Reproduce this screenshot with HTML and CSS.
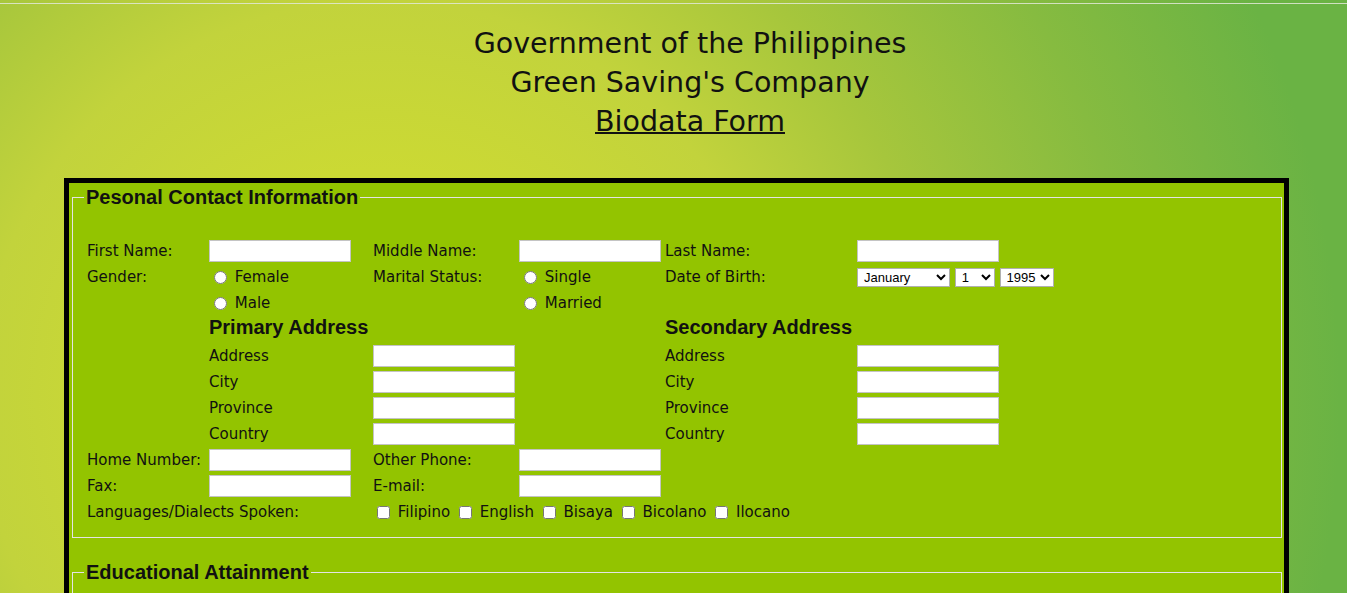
FILE: index.html
```html
<!DOCTYPE html>
<html lang="en">
<head>
    <meta charset="UTF-8">
    <meta name="viewport" content="width=device-width, initial-scale=1.0">
    <title>Biodata Form</title>
    <link rel="stylesheet" href="styles.css">
</head>
<body>
    <div class="topline"></div>

    <div class="header">
        Government of the Philippines<br>
        Green Saving's Company<br>
        <u>Biodata Form</u>
    </div>

    <form class="form-box">
        <fieldset>
            <legend>Pesonal Contact Information</legend>
            <table class="grid">
                <colgroup>
                    <col class="c1"><col class="c2"><col class="c3"><col class="c4"><col class="c5"><col>
                </colgroup>
                <tr>
                    <td>First Name:</td>
                    <td><input type="text" name="fname"></td>
                    <td>Middle Name:</td>
                    <td><input type="text" name="mname"></td>
                    <td>Last Name:</td>
                    <td><input type="text" name="lname"></td>
                </tr>
                <tr>
                    <td>Gender:</td>
                    <td><input type="radio" name="gender" value="f"> Female</td>
                    <td>Marital Status:</td>
                    <td><input type="radio" name="status" value="s"> Single</td>
                    <td>Date of Birth:</td>
                    <td class="dob">
                        <select class="month">
                            <option>January</option><option>February</option><option>March</option>
                            <option>April</option><option>May</option><option>June</option>
                            <option>July</option><option>August</option><option>September</option>
                            <option>October</option><option>November</option><option>December</option>
                        </select>
                        <select class="day">
                            <option>1</option><option>2</option><option>3</option><option>4</option>
                            <option>5</option><option>6</option><option>7</option><option>8</option>
                            <option>9</option><option>10</option><option>11</option><option>12</option>
                            <option>13</option><option>14</option><option>15</option><option>16</option>
                            <option>17</option><option>18</option><option>19</option><option>20</option>
                            <option>21</option><option>22</option><option>23</option><option>24</option>
                            <option>25</option><option>26</option><option>27</option><option>28</option>
                            <option>29</option><option>30</option><option>31</option>
                        </select>
                        <select class="year">
                            <option>1995</option><option>1996</option><option>1997</option>
                            <option>1998</option><option>1999</option><option>2000</option>
                        </select>
                    </td>
                </tr>
                <tr>
                    <td></td>
                    <td><input type="radio" name="gender" value="m"> Male</td>
                    <td></td>
                    <td><input type="radio" name="status" value="m"> Married</td>
                    <td></td>
                    <td></td>
                </tr>
                <tr class="head-row">
                    <td></td>
                    <td colspan="2" class="sub">Primary Address</td>
                    <td></td>
                    <td colspan="2" class="sub">Secondary Address</td>
                </tr>
                <tr>
                    <td></td>
                    <td>Address</td>
                    <td><input type="text" name="addr1"></td>
                    <td></td>
                    <td>Address</td>
                    <td><input type="text" name="addr2"></td>
                </tr>
                <tr>
                    <td></td>
                    <td>City</td>
                    <td><input type="text" name="city1"></td>
                    <td></td>
                    <td>City</td>
                    <td><input type="text" name="city2"></td>
                </tr>
                <tr>
                    <td></td>
                    <td>Province</td>
                    <td><input type="text" name="prov1"></td>
                    <td></td>
                    <td>Province</td>
                    <td><input type="text" name="prov2"></td>
                </tr>
                <tr>
                    <td></td>
                    <td>Country</td>
                    <td><input type="text" name="country1"></td>
                    <td></td>
                    <td>Country</td>
                    <td><input type="text" name="country2"></td>
                </tr>
                <tr>
                    <td>Home Number:</td>
                    <td><input type="text" name="home"></td>
                    <td>Other Phone:</td>
                    <td><input type="text" name="other"></td>
                    <td></td>
                    <td></td>
                </tr>
                <tr>
                    <td>Fax:</td>
                    <td><input type="text" name="fax"></td>
                    <td>E-mail:</td>
                    <td><input type="text" name="email"></td>
                    <td></td>
                    <td></td>
                </tr>
                <tr>
                    <td colspan="2">Languages/Dialects Spoken:</td>
                    <td colspan="4"><input type="checkbox"> Filipino <input type="checkbox"> English <input type="checkbox"> Bisaya <input type="checkbox"> Bicolano <input type="checkbox"> Ilocano</td>
                </tr>
            </table>
        </fieldset>

        <fieldset class="edu">
            <legend>Educational Attainment</legend>
            <table class="grid">
                <colgroup>
                    <col class="c1"><col class="c2"><col class="c3"><col class="c4"><col class="c5"><col>
                </colgroup>
                <tr>
                    <td>Elementary:</td>
                    <td><input type="text" name="elem"></td>
                    <td>Year Graduated:</td>
                    <td><input type="text" name="elemyr"></td>
                    <td></td>
                    <td></td>
                </tr>
                <tr>
                    <td>High School:</td>
                    <td><input type="text" name="hs"></td>
                    <td>Year Graduated:</td>
                    <td><input type="text" name="hsyr"></td>
                    <td></td>
                    <td></td>
                </tr>
                <tr>
                    <td>College:</td>
                    <td><input type="text" name="col"></td>
                    <td>Year Graduated:</td>
                    <td><input type="text" name="colyr"></td>
                    <td></td>
                    <td></td>
                </tr>
            </table>
        </fieldset>
    </form>
</body>
</html>
```

FILE: styles.css
```css
html {
    background: radial-gradient(circle at 380px 400px, #d0dc2e 0, #cbd934 230px, #c2d33c 400px, #a6c63c 560px, #86bb40 760px, #6ab344 960px);
    background-color: #6ab344;
}
body {
    margin: 0;
    font-family: "DejaVu Sans", sans-serif;
    color: #111;
}
.topline {
    margin-top: 3px;
    height: 1px;
    background: rgba(225, 232, 215, 0.85);
}
.header {
    padding: 20px 0 0 33px;
    text-align: center;
    font-size: 28.5px;
    line-height: 39px;
}
.header u {
    text-decoration-thickness: 2px;
}
.form-box {
    width: 1215px;
    margin: 37px 0 0 64px;
    padding: 3px 0 0;
    border: 5px solid #000;
    background: #93c400;
}
fieldset {
    margin: 0 2px 0 3px;
    padding: 0 12px 12px 11px;
    border: 1px solid #e4e4e4;
}
legend {
    padding: 0 2px;
    font: bold 20px "Liberation Sans", Arial, sans-serif;
}
.edu {
    margin-top: 23px;
}
.grid {
    margin: 29px 0 0 3px;
    border-collapse: collapse;
    table-layout: fixed;
    font-size: 15px;
}
.grid td {
    height: 26px;
    padding: 0;
    white-space: nowrap;
    vertical-align: middle;
}
.grid .head-row td {
    height: 27px;
    vertical-align: top;
}
.c1 { width: 122px; }
.c2 { width: 164px; }
.c3 { width: 146px; }
.c4 { width: 146px; }
.c5 { width: 192px; }
.sub {
    font: bold 20px "Liberation Sans", Arial, sans-serif;
}
input[type="text"] {
    box-sizing: border-box;
    width: 142px;
    height: 22px;
    margin: 0;
    border: 1px solid #c4c4c4;
    background: #fff;
    vertical-align: middle;
}
input[type="radio"],
input[type="checkbox"] {
    vertical-align: -2px;
}
.dob select {
    box-sizing: border-box;
    height: 19px;
    margin: 0;
    padding: 0 0 0 2px;
    border: 1px solid #b0b0b0;
    background: #fff;
    font: 13px "Liberation Sans", Arial, sans-serif;
    vertical-align: middle;
}
.dob .month { width: 93px; }
.dob .day { width: 40px; }
.dob .year { width: 54px; }
```
